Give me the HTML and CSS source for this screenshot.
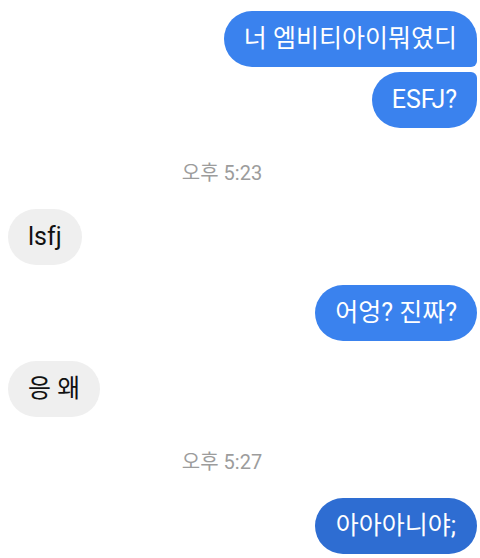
FILE: index.html
```html
<!DOCTYPE html>
<html lang="ko">
<head>
<meta charset="utf-8">
<link rel="stylesheet" href="styles.css">
</head>
<body>
<div class="chat">
  <div class="msg out first">너 엠비티아이뭐였디</div>
  <div class="msg out last gap-s">ESFJ?</div>
  <div class="time">오후 5:23</div>
  <div class="msg in">lsfj</div>
  <div class="msg out gap-l">어엉? 진짜?</div>
  <div class="msg in gap-l">응 왜</div>
  <div class="time">오후 5:27</div>
  <div class="msg out dark">아아아니야;</div>
</div>
</body>
</html>
```
FILE: styles.css
```css
html, body {
  margin: 0;
  padding: 0;
  background: #ffffff;
}
.chat {
  display: flex;
  flex-direction: column;
  padding: 11px 3px 0 8px;
  font-family: "Roboto", "Noto Sans CJK KR", sans-serif;
}
.msg {
  font-size: 25px;
  line-height: 56px;
  height: 56px;
  padding: 0 20px;
  border-radius: 28px;
  white-space: nowrap;
}
.out {
  align-self: flex-end;
  background: #3a82ee;
  color: #ffffff;
}
.out.dark {
  background: #2e6dd2;
  padding: 0 21px;
}
.in {
  align-self: flex-start;
  background: #efefef;
  color: #111111;
}
.first {
  border-bottom-right-radius: 6px;
}
.last {
  border-top-right-radius: 6px;
}
.gap-s {
  margin-top: 5px;
}
.gap-l {
  margin-top: 20px;
}
.time {
  align-self: center;
  margin: 33px 41px 24px 0;
  font-size: 20px;
  line-height: 24px;
  color: #9c9c9c;
}
```
